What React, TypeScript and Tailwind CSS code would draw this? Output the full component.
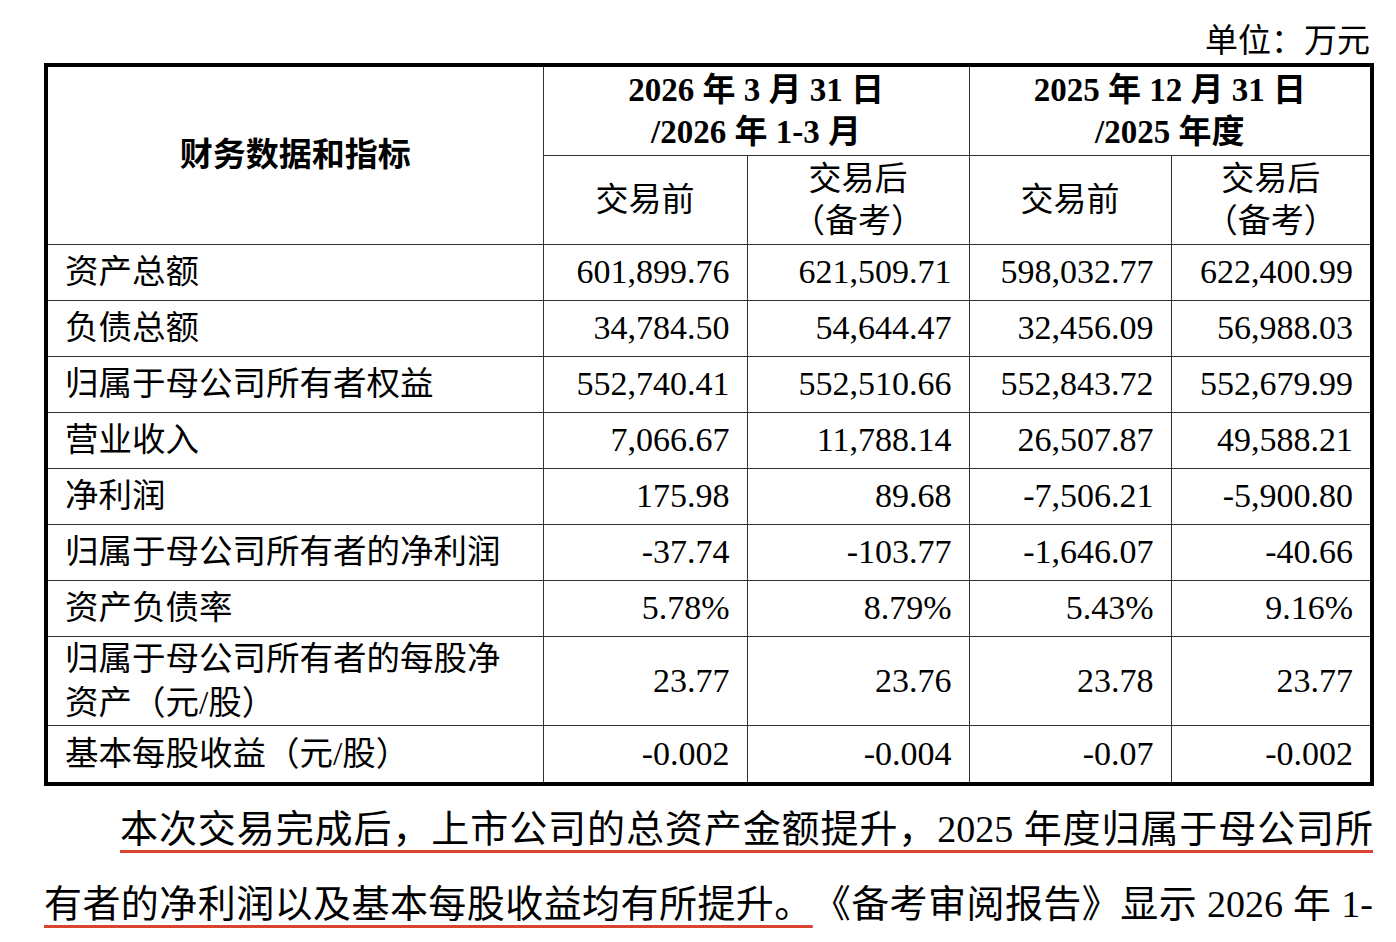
import React from "react";

type Row = { label: React.ReactNode; values: string[]; h: string };

const rows: Row[] = [
  { label: "资产总额", values: ["601,899.76", "621,509.71", "598,032.77", "622,400.99"], h: "h-[56px]" },
  { label: "负债总额", values: ["34,784.50", "54,644.47", "32,456.09", "56,988.03"], h: "h-[56px]" },
  { label: "归属于母公司所有者权益", values: ["552,740.41", "552,510.66", "552,843.72", "552,679.99"], h: "h-[56px]" },
  { label: "营业收入", values: ["7,066.67", "11,788.14", "26,507.87", "49,588.21"], h: "h-[56px]" },
  { label: "净利润", values: ["175.98", "89.68", "-7,506.21", "-5,900.80"], h: "h-[56px]" },
  { label: "归属于母公司所有者的净利润", values: ["-37.74", "-103.77", "-1,646.07", "-40.66"], h: "h-[56px]" },
  { label: "资产负债率", values: ["5.78%", "8.79%", "5.43%", "9.16%"], h: "h-[56px]" },
  {
    label: (
      <>
        归属于母公司所有者的每股净
        <br />
        资产（元/股）
      </>
    ),
    values: ["23.77", "23.76", "23.78", "23.77"],
    h: "h-[89px]",
  },
  { label: "基本每股收益（元/股）", values: ["-0.002", "-0.004", "-0.07", "-0.002"], h: "h-[59px]" },
];

const cell = "border-[1.5px] border-[#333]";

export default function App() {
  return (
    <div className="min-h-screen bg-white text-black font-['Liberation_Serif','Noto_Sans_CJK_SC',serif] [text-spacing-trim:space-all]">
      <div className="pl-[44px] pr-[23px]">
        <div className="h-[63px] pt-[25px] pr-[3px] text-right text-[33px] leading-[33px]">单位：万元</div>

        <table className="w-[1326px] table-fixed border-collapse border-4 border-black text-[33px]">
          <colgroup>
            <col className="w-[497px]" />
            <col className="w-[204px]" />
            <col className="w-[222px]" />
            <col className="w-[202px]" />
            <col className="w-[201px]" />
          </colgroup>
          <thead>
            <tr className="h-[90px]">
              <th rowSpan={2} className={`${cell} font-bold leading-[40px]`}>
                财务数据和指标
              </th>
              <th colSpan={2} className={`${cell} font-bold leading-[42px]`}>
                2026 年 3 月 31 日
                <br />
                /2026 年 1-3 月
              </th>
              <th colSpan={2} className={`${cell} font-bold leading-[42px]`}>
                2025 年 12 月 31 日
                <br />
                /2025 年度
              </th>
            </tr>
            <tr className="h-[89px]">
              <th className={`${cell} font-normal leading-[42px]`}>交易前</th>
              <th className={`${cell} font-normal leading-[42px]`}>
                交易后
                <br />
                （备考）
              </th>
              <th className={`${cell} font-normal leading-[42px]`}>交易前</th>
              <th className={`${cell} font-normal leading-[42px]`}>
                交易后
                <br />
                （备考）
              </th>
            </tr>
          </thead>
          <tbody>
            {rows.map((r, i) => (
              <tr key={i} className={r.h}>
                <td className={`${cell} pl-[17px] pr-[10px] text-left text-[33.5px] leading-[44px]`}>{r.label}</td>
                {r.values.map((v, j) => (
                  <td key={j} className={`${cell} pr-[17px] text-right text-[34px] leading-[44px]`}>
                    {v}
                  </td>
                ))}
              </tr>
            ))}
          </tbody>
        </table>

        <p className="mt-[6px] w-[1329px] text-justify [text-align-last:justify] text-[38px] leading-[75px] indent-[76px]">
          <span className="underline decoration-[#d9432f] decoration-[3px] underline-offset-[8px]">
            本次交易完成后，上市公司的总资产金额提升，2025 年度归属于母公司所
            <br />
            有者的净利润以及基本每股收益均有所提升。
          </span>
          《备考审阅报告》显示 2026 年 1-
        </p>
      </div>
    </div>
  );
}
